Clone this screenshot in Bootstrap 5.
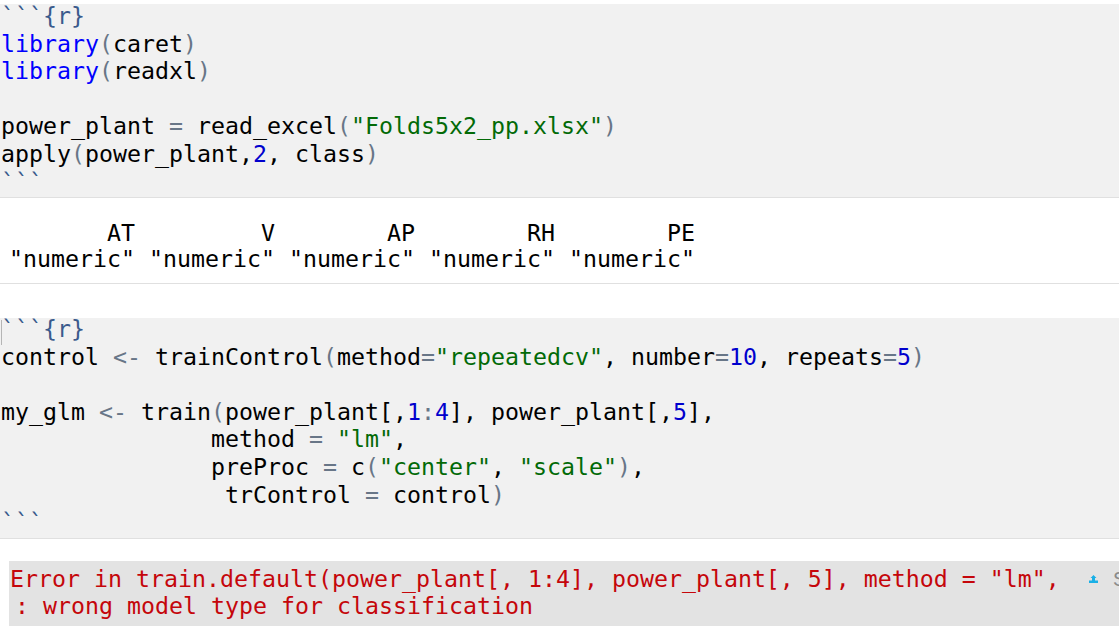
<!DOCTYPE html>
<html lang="en">
<head>
<meta charset="utf-8">
<title>R Markdown</title>
<link href="https://cdn.jsdelivr.net/npm/bootstrap@5.3.0/dist/css/bootstrap.min.css" rel="stylesheet">
<style>
html, body { background: #fff; overflow: hidden; height: 632px; }
.rmd-page { padding-top: 4px; width: 1119px; height: 632px; overflow: hidden; font-family: "DejaVu Sans Mono", "Liberation Mono", monospace; font-size: 23.25px; line-height: 27.6px; color: #000; }
.rmd-line { white-space: pre; height: 27.6px; }
.rmd-chunk { background: #f1f1f1; border-bottom: 1px solid #e0e0e0; position: relative; padding-left: 1px; }
.rmd-chunk .rmd-line { line-height: 23.6px; }
.chunk-a { height: 194px; }
.chunk-b { height: 221px; margin-top: 34px; }
.chunk-b .rmd-line { line-height: 22.8px; }
.rmd-output { height: 86px; border-bottom: 1px solid #e0e0e0; padding-top: 22px; padding-left: 9px; line-height: 26px; }
.rmd-output .rmd-line { height: 26px; }
.rmd-error { margin-top: 22px; margin-left: 9px; height: 65px; background: #e3e3e3; color: #c5060b; padding-top: 4px; padding-left: 1px; position: relative; overflow: hidden; line-height: 27px; }
.rmd-error .rmd-line { height: 27px; }
.rmd-wrapped { padding-left: 5px; }
.rmd-tb { position: absolute; left: 1080px; top: 7px; display: flex; align-items: center; gap: 15px; color: #8a8a8a; font-family: "Liberation Sans", sans-serif; font-size: 20px; line-height: 22px; white-space: nowrap; }
.rmd-caret { position: absolute; left: 1px; top: 2px; width: 1px; height: 25px; background: #b5b5b5; }
.t-kw { color: #0000ff; }
.t-p { color: #687687; }
.t-s { color: #036a07; }
.t-n { color: #0000cd; }
.t-h { color: #3a5a8c; }
</style>
</head>
<body>
<main class="rmd-page">
  <section class="rmd-chunk chunk-a">
    <div class="rmd-line"><span class="t-h">```{r}</span></div>
    <div class="rmd-line"><span class="t-kw">library</span><span class="t-p">(</span>caret<span class="t-p">)</span></div>
    <div class="rmd-line"><span class="t-kw">library</span><span class="t-p">(</span>readxl<span class="t-p">)</span></div>
    <div class="rmd-line"> </div>
    <div class="rmd-line">power_plant <span class="t-p">=</span> read_excel<span class="t-p">(</span><span class="t-s">"Folds5x2_pp.xlsx"</span><span class="t-p">)</span></div>
    <div class="rmd-line">apply<span class="t-p">(</span>power_plant,<span class="t-n">2</span>, class<span class="t-p">)</span></div>
    <div class="rmd-line"><span class="t-h">```</span></div>
  </section>
  <section class="rmd-output">
    <div class="rmd-line">       AT         V        AP        RH        PE </div>
    <div class="rmd-line">"numeric" "numeric" "numeric" "numeric" "numeric" </div>
  </section>
  <section class="rmd-chunk chunk-b">
    <span class="rmd-caret"></span>
    <div class="rmd-line"><span class="t-h">```{r}</span></div>
    <div class="rmd-line">control <span class="t-p">&lt;-</span> trainControl<span class="t-p">(</span>method<span class="t-p">=</span><span class="t-s">"repeatedcv"</span>, number<span class="t-p">=</span><span class="t-n">10</span>, repeats<span class="t-p">=</span><span class="t-n">5</span><span class="t-p">)</span></div>
    <div class="rmd-line"> </div>
    <div class="rmd-line">my_glm <span class="t-p">&lt;-</span> train<span class="t-p">(</span>power_plant[,<span class="t-n">1</span><span class="t-p">:</span><span class="t-n">4</span>], power_plant[,<span class="t-n">5</span>],</div>
    <div class="rmd-line">               method <span class="t-p">=</span> <span class="t-s">"lm"</span>,</div>
    <div class="rmd-line">               preProc <span class="t-p">=</span> c<span class="t-p">(</span><span class="t-s">"center"</span>, <span class="t-s">"scale"</span><span class="t-p">)</span>,</div>
    <div class="rmd-line">                trControl <span class="t-p">=</span> control<span class="t-p">)</span></div>
    <div class="rmd-line"><span class="t-h">```</span></div>
  </section>
  <section class="rmd-error">
    <div class="rmd-line">Error in train.default(power_plant[, 1:4], power_plant[, 5], method = "lm", </div>
    <div class="rmd-line rmd-wrapped">: wrong model type for classification</div>
    <div class="rmd-tb">
      <svg width="9" height="8" viewBox="0 0 9 8" aria-hidden="true"><path d="M4.5 0 7.5 3H6V5.5H9V8H0V5.5H3V3H1.5Z" fill="#1ab0e6"/></svg>
      <span>Show Traceback</span>
    </div>
  </section>
</main>
</body>
</html>
